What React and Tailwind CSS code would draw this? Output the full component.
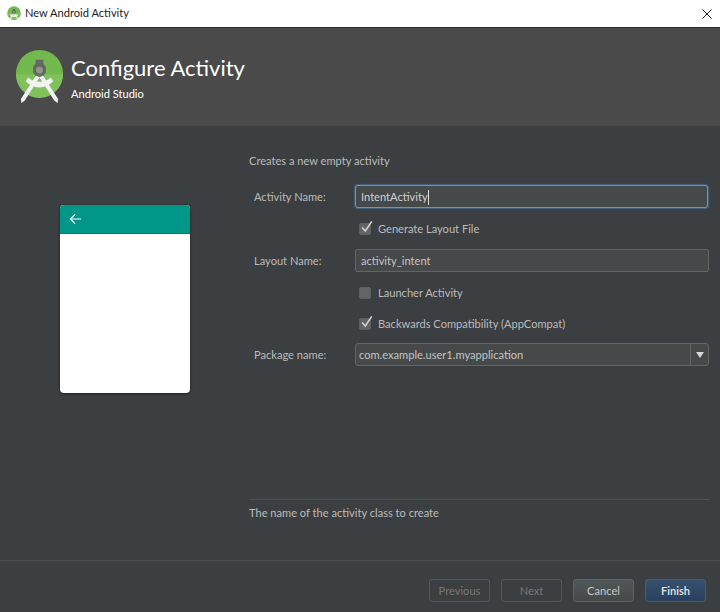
const FONT = 'font-["Lato","Noto_Sans","Liberation_Sans",sans-serif]';

// Android Studio compass logo
const StudioLogo = ({ size = 50, className }) => (
    <svg viewBox="0 0 50 56" width={size} height={(size * 56) / 50} className={className}>
        <circle cx="25" cy="25" r="24" fill="#74b94f" />
        <path d="M1 26 A24 24 0 0 0 49 26 Z" fill="#80c15c" />
        <path d="M21 15 V11 H29 V15 L31.500 18 V24 L28.500 28 H21.500 L18.500 24 V18 Z" fill="#666666" />
        <circle cx="25" cy="21.500" r="3.500" fill="#8f9a86" />
        <path d="M21.500 27 L6 51 L6.500 55 L10 52.500 L25 29 Z M28.500 27 L44 51 L43.500 55 L40 52.500 L25 29 Z" fill="#f2f2f2" />
        <path d="M13.500 29 C20 35 30 35 36.500 29 L39 33 C31 41.500 19 41.500 11 33 Z" fill="#f2f2f2" />
    </svg>
);

const Check = () => (
    <svg viewBox="0 0 16 16" className="absolute -top-[4px] left-[0px] h-[14px] w-[14px]">
        <path d="M2.500 8.500 L6 12.500 L13.500 1.500" fill="none" stroke="#d8d8d8" strokeWidth="1.700" />
    </svg>
);

const CheckRow = ({ label, checked, className }) => (
    <div className={`flex h-[16px] items-center gap-[7px] pl-[110px] ${className}`}>
        <span className="relative h-[12px] w-[12px] rounded-[2px] border border-[#5c5f60] bg-[#626466]">
            {checked && <Check />}
        </span>
        <span className="text-[11.100px] text-[#bbbbbb]">{label}</span>
    </div>
);

const FormLabel = ({ children }) => (
    <span className="w-[106px] pl-[5px] pt-[2px] text-[11.100px] text-[#bbbbbb]">{children}</span>
);

const WizardButton = ({ children, variant = 'disabled' }) => {
    const variants = {
        disabled: 'border-[#555758] text-[#777777]',
        normal: 'border-[#606263] bg-gradient-to-b from-[#515658] to-[#45494a] text-[#c8c8c8]',
        primary: 'border-[#4f5a66] bg-gradient-to-b from-[#36506f] to-[#29415e] font-semibold text-[#e6e6e6]',
    };

    return (
        <div className={`flex h-[23px] w-[61px] items-center justify-center rounded-[3px] border pt-[2px] text-[11.100px] ${variants[variant]}`}>
            {children}
        </div>
    );
};

export default function App() {
    return (
        <div className={`flex h-[612px] w-[720px] flex-col overflow-hidden bg-[#3c3f41] ${FONT}`}>
            {/* title bar */}
            <div className="flex h-[28px] items-center border-b border-[#2b2b2b] bg-white pl-[7px] pr-[8px]">
                <StudioLogo size={14} />
                <span className="ml-[4px] text-[11.100px] text-[#1c1c1c]">New Android Activity</span>
                <svg viewBox="0 0 10 10" className="ml-auto h-[10px] w-[10px]">
                    <path d="M0.500 0.500 L9.500 9.500 M9.500 0.500 L0.500 9.500" stroke="#1a1a1a" strokeWidth="1" />
                </svg>
            </div>

            {/* banner */}
            <div className="flex h-[98px] items-start bg-[#4a4a4a] pl-[15px] pt-[21px]">
                <StudioLogo size={49} />
                <div className="ml-[7px] pt-[4px]">
                    <div className="text-[22px] leading-[30px] text-white">Configure Activity</div>
                    <div className="mt-[3px] text-[11.100px] leading-[16px] text-white">Android Studio</div>
                </div>
            </div>

            {/* body */}
            <div className="flex h-[435px] border-b border-[#4c4f51]">
                <div className="w-[249px] pl-[60px] pt-[79px]">
                    <div className="h-[188px] w-[130px] overflow-hidden rounded-[4px] bg-white shadow-[0_1px_3px_rgba(0,0,0,0.5)]">
                        <div className="flex h-[29px] items-center border-b border-[#00806f] bg-[#009688] pl-[9px]">
                            <svg viewBox="0 0 14 12" className="h-[12px] w-[13px]">
                                <path d="M6.500 1 L1.500 6 L6.500 11 M1.500 6 H13" fill="none" stroke="white" strokeWidth="1.300" />
                            </svg>
                        </div>
                    </div>
                </div>

                <div className="flex w-[460px] flex-col pt-[27px]">
                    <div className="text-[11.100px] leading-[16px] text-[#bbbbbb]">Creates a new empty activity</div>

                    <div className="mt-[16px] flex items-center">
                        <FormLabel>Activity Name:</FormLabel>
                        <div className="flex h-[23px] w-[353px] items-center rounded-[3px] border border-[#6a93bd] bg-[#45494a] pl-[5px] pt-[2px] text-[11.100px] text-[#d0d0d0] shadow-[0_0_1px_1px_rgba(70,120,170,0.6)]">
                            IntentActivity
                            <span className="h-[15px] w-px bg-[#dddddd]" />
                        </div>
                    </div>

                    <CheckRow label="Generate Layout File" checked className="mt-[13px]" />

                    <div className="mt-[12px] flex items-center">
                        <FormLabel>Layout Name:</FormLabel>
                        <div className="flex h-[23px] w-[354px] items-center rounded-[2px] border border-[#646464] bg-[#45494a] pl-[5px] pt-[2px] text-[11.100px] text-[#c4c4c4]">
                            activity_intent
                        </div>
                    </div>

                    <CheckRow label="Launcher Activity" className="mt-[13px]" />
                    <CheckRow label="Backwards Compatibility (AppCompat)" checked className="mt-[15px]" />

                    <div className="mt-[11px] flex items-center">
                        <FormLabel>Package name:</FormLabel>
                        <div className="flex h-[23px] w-[354px] items-center rounded-[3px] border border-[#646464] bg-[#45494a] pl-[3px] text-[11.100px] text-[#c4c4c4]">
                            <span className="pt-[2px]">com.example.user1.myapplication</span>
                            <div className="ml-auto flex h-full w-[18px] items-center justify-center border-l border-[#646464]">
                                <svg viewBox="0 0 8 6" className="h-[6px] w-[8px]">
                                    <path d="M0 0 H8 L4 6 Z" fill="#d8d8d8" />
                                </svg>
                            </div>
                        </div>
                    </div>

                    <div className="mt-[133px] border-t border-[#4c4f51] pt-[5px] text-[11.100px] leading-[16px] text-[#bbbbbb]">
                        The name of the activity class to create
                    </div>
                </div>
            </div>

            {/* footer */}
            <div className="flex items-start justify-end gap-[11px] pr-[14px] pt-[18px]">
                <WizardButton>Previous</WizardButton>
                <WizardButton>Next</WizardButton>
                <WizardButton variant="normal">Cancel</WizardButton>
                <WizardButton variant="primary">Finish</WizardButton>
            </div>
        </div>
    );
}
